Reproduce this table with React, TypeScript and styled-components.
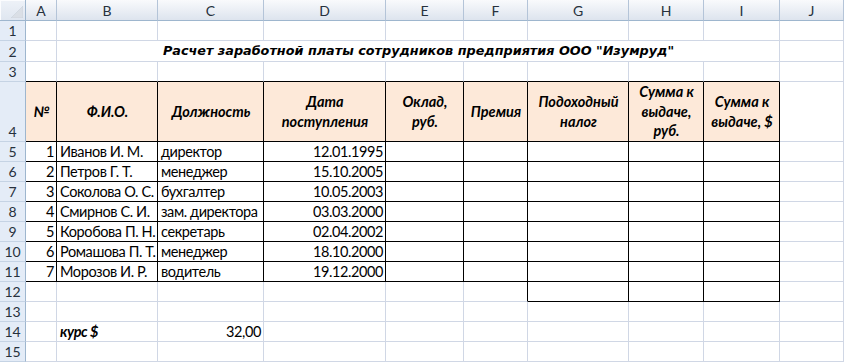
import React from 'react';
import styled, { createGlobalStyle } from 'styled-components';

const GlobalStyle = createGlobalStyle`
  html, body { margin: 0; padding: 0; background: #ffffff; overflow: hidden; }
  body { font-family: Lato, 'Liberation Sans', sans-serif; }
`;

const COLS = [26, 31, 101, 106, 122, 78, 64, 101, 75, 76, 64];
const ROWS = [21, 20, 21, 20, 60, 20, 20, 20, 20, 20, 20, 20, 20, 20, 20, 20];
const LETTERS = ['A', 'B', 'C', 'D', 'E', 'F', 'G', 'H', 'I', 'J'];

const GRID = '#d0d7e5';
const BLACK = '#000000';
const HEAD_LINE = '#9eb6ce';
const FONT = "Lato, 'Liberation Sans', sans-serif";

const Sheet = styled.div`
  display: grid;
  grid-template-columns: ${COLS.map((c) => `${c}px`).join(' ')};
  grid-template-rows: ${ROWS.map((r) => `${r}px`).join(' ')};
  width: 844px;
  height: 363px;
  overflow: hidden;
  background: #fff;
`;

const Corner = styled.div`
  position: relative;
  box-sizing: border-box;
  background: linear-gradient(#eef2f8, #dfe6f0);
  border-right: 1px solid ${HEAD_LINE};
  border-bottom: 1px solid ${HEAD_LINE};
  box-shadow: inset 1px 1px 0 #fbfcfe;
`;

const CornerMark = styled.svg`
  position: absolute;
  right: 2px;
  bottom: 2px;
`;

const ColHeader = styled.div`
  box-sizing: border-box;
  display: flex;
  align-items: center;
  justify-content: center;
  background: linear-gradient(#f9fafc, #dde4ee);
  border-right: 1px solid #b4c4d8;
  border-bottom: 1px solid ${HEAD_LINE};
  font-family: ${FONT};
  font-size: 14px;
  color: #27313d;
  padding-top: 1px;
`;

const RowHeader = styled.div`
  box-sizing: border-box;
  display: flex;
  align-items: flex-end;
  justify-content: center;
  background: #e4ecf7;
  border-right: 1px solid ${HEAD_LINE};
  border-bottom: 1px solid #c5d3e4;
  font-family: ${FONT};
  font-size: 14px;
  line-height: 18px;
  color: #27313d;
`;

type Align = 'left' | 'right' | 'center';

const Cell = styled.div<{
  $right: string;
  $bottom: string;
  $fill?: string;
  $align?: Align;
  $strong?: boolean;
  $span?: number;
  $head?: boolean;
}>`
  box-sizing: border-box;
  display: flex;
  flex-direction: column;
  justify-content: ${(p) => (p.$head ? 'center' : 'flex-end')};
  align-items: ${(p) =>
    p.$align === 'right' ? 'flex-end' : p.$align === 'center' ? 'center' : 'flex-start'};
  text-align: ${(p) => p.$align || 'left'};
  grid-column: ${(p) => (p.$span ? `span ${p.$span}` : 'auto')};
  background: ${(p) => p.$fill || 'transparent'};
  border-right: 1px solid ${(p) => p.$right};
  border-bottom: 1px solid ${(p) => p.$bottom};
  padding: 0 2px 0 3px;
  font-family: ${FONT};
  font-size: 14.5px;
  letter-spacing: ${(p) => (p.$head ? '0' : '-0.4px')};
  line-height: ${(p) => (p.$head ? '19.5px' : '18px')};
  font-weight: ${(p) => (p.$strong ? 700 : 400)};
  font-style: ${(p) => (p.$strong ? 'italic' : 'normal')};
  color: #000;
  white-space: nowrap;
  overflow: visible;
`;

const Title = styled.span`
  font-family: 'DejaVu Sans', Verdana, sans-serif;
  font-size: 12.8px;
  font-weight: 700;
  font-style: italic;
  letter-spacing: 0;
  line-height: 20px;
`;

const Line = styled.span`
  display: block;
`;

const HEADERS: string[][] = [
  ['№'],
  ['Ф.И.О.'],
  ['Должность'],
  ['Дата', 'поступления'],
  ['Оклад,', 'руб.'],
  ['Премия'],
  ['Подоходный', 'налог'],
  ['Сумма к', 'выдаче,', 'руб.'],
  ['Сумма к', 'выдаче, $'],
];

const PEOPLE: [string, string, string][] = [
  ['Иванов И. М.', 'директор', '12.01.1995'],
  ['Петров Г. Т.', 'менеджер', '15.10.2005'],
  ['Соколова О. С.', 'бухгалтер', '10.05.2003'],
  ['Смирнов С. И.', 'зам. директора', '03.03.2000'],
  ['Коробова П. Н.', 'секретарь', '02.04.2002'],
  ['Ромашова П. Т.', 'менеджер', '18.10.2000'],
  ['Морозов И. Р.', 'водитель', '19.12.2000'],
];

const inRange = (v: number, a: number, b: number) => v >= a && v <= b;

function bottomColor(r: number, c: number) {
  if ((r === 3 || inRange(r, 4, 11)) && inRange(c, 0, 8)) return BLACK;
  if (r === 12 && inRange(c, 6, 8)) return BLACK;
  return GRID;
}

function rightColor(r: number, c: number) {
  if (inRange(r, 4, 11) && inRange(c, 0, 8)) return BLACK;
  if (r === 12 && inRange(c, 5, 8)) return BLACK;
  return GRID;
}

export default function App() {
  const cells: React.ReactNode[] = [];

  cells.push(
    <Corner key="corner">
      <CornerMark width="12" height="12" viewBox="0 0 12 12">
        <polygon points="12,0 12,12 0,12" fill="#dadfe6" stroke="#c9d1dc" strokeWidth="0.6" />
      </CornerMark>
    </Corner>
  );
  LETTERS.forEach((l) => cells.push(<ColHeader key={`h${l}`}>{l}</ColHeader>));

  for (let r = 1; r <= 15; r++) {
    cells.push(<RowHeader key={`r${r}`}>{r}</RowHeader>);
    for (let c = 0; c < 10; c++) {
      const key = `c${r}-${c}`;
      const base = { $right: rightColor(r, c), $bottom: bottomColor(r, c) };

      if (r === 2 && c === 1) {
        cells.push(
          <Cell key={key} {...base} $right={GRID} $span={8} $align="center">
            <Title>Расчет заработной платы сотрудников предприятия ООО "Изумруд"</Title>
          </Cell>
        );
        c = 8;
        continue;
      }

      if (r === 4 && c <= 8) {
        cells.push(
          <Cell key={key} {...base} $fill="#fde9d9" $align="center" $strong $head>
            {HEADERS[c].map((t) => (
              <Line key={t}>{t}</Line>
            ))}
          </Cell>
        );
        continue;
      }

      if (inRange(r, 5, 11) && c <= 3) {
        const i = r - 5;
        const p = PEOPLE[i];
        const content = c === 0 ? String(i + 1) : p[c - 1];
        const align: Align = c === 0 || c === 3 ? 'right' : 'left';
        cells.push(
          <Cell key={key} {...base} $align={align}>
            {content}
          </Cell>
        );
        continue;
      }

      if (r === 14 && c === 1) {
        cells.push(
          <Cell key={key} {...base} $strong>
            курс $
          </Cell>
        );
        continue;
      }

      if (r === 14 && c === 2) {
        cells.push(
          <Cell key={key} {...base} $align="right">
            32,00
          </Cell>
        );
        continue;
      }

      cells.push(<Cell key={key} {...base} />);
    }
  }

  return (
    <>
      <GlobalStyle />
      <Sheet>{cells}</Sheet>
    </>
  );
}
